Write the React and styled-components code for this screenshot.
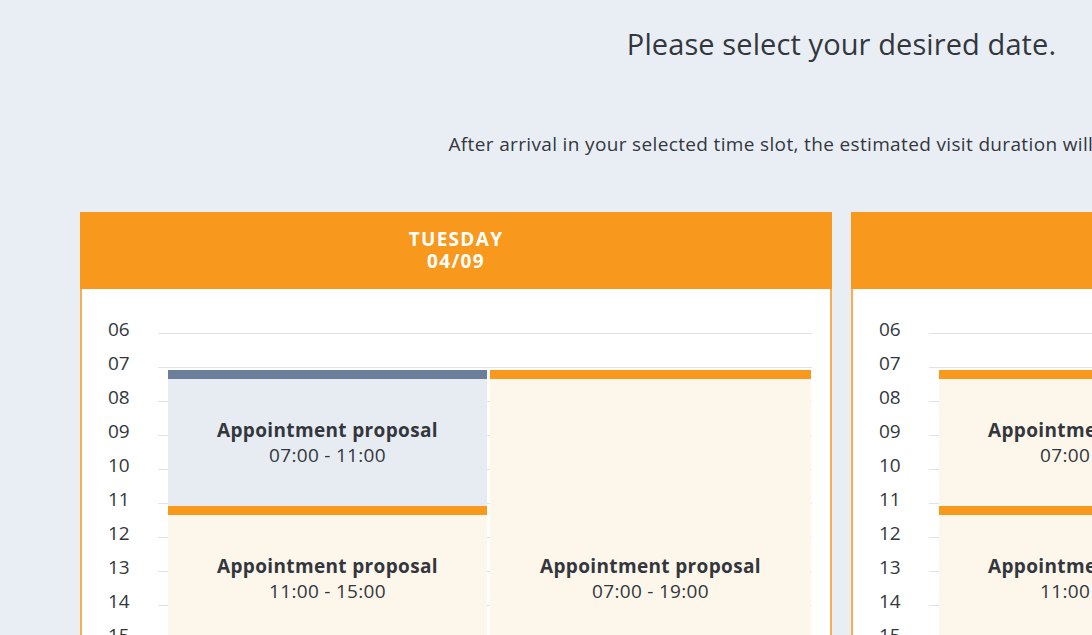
import React from 'react'
import styled, { createGlobalStyle } from 'styled-components'

const GlobalStyle = createGlobalStyle`
  html, body {
    margin: 0;
    padding: 0;
    background: #e9eef5;
    overflow: hidden;
  }
  body {
    font-family: 'Open Sans', 'Noto Sans', sans-serif;
    color: #33373d;
  }
`

const FIRST_HOUR = 6
const LAST_HOUR = 20
const hours = []
for (let h = FIRST_HOUR; h <= LAST_HOUR; h++) hours.push(h)

const days = [
  {
    name: 'Tuesday',
    date: '04/09',
    slots: [
      { col: 1, from: 7, to: 11, selected: true },
      { col: 1, from: 11, to: 15 },
      { col: 1, from: 15, to: 19 },
      { col: 2, from: 7, to: 19 },
    ],
  },
  {
    name: 'Wednesday',
    date: '05/09',
    slots: [
      { col: 1, from: 7, to: 11 },
      { col: 1, from: 11, to: 15 },
      { col: 1, from: 15, to: 19 },
      { col: 2, from: 7, to: 19 },
    ],
  },
]

const pad = (n) => String(n).padStart(2, '0')
// each hour takes two 17px rows, the hour line sits between them
const lineOf = (h) => 2 * (h - FIRST_HOUR) + 2

const App = () => {
  return (
    <>
      <GlobalStyle />
      <Page>
        <Title>Please select your desired date.</Title>
        <Intro>
          After arrival in your selected time slot, the estimated visit duration will be 30 minutes.
        </Intro>
        <Days>
          {days.map((day) => (
            <DayCard key={day.date}>
              <DayHeader>
                <span>{day.name}</span>
                <span>{day.date}</span>
              </DayHeader>
              <DayBody>
                <Timeline>
                  {hours.map((h) => (
                    <React.Fragment key={h}>
                      <HourLabel style={{ gridRow: `${lineOf(h) - 1} / span 2` }}>{pad(h)}</HourLabel>
                      <HourLine style={{ gridRow: `${lineOf(h) - 1} / span 2` }} />
                    </React.Fragment>
                  ))}
                  {day.slots.map((s, i) => (
                    <Slot
                      key={i}
                      $col={s.col}
                      $selected={s.selected}
                      style={{ gridRow: `${lineOf(s.from)} / ${lineOf(s.to)}` }}
                    >
                      <SlotTitle>Appointment proposal</SlotTitle>
                      <SlotTime>
                        {pad(s.from)}:00 - {pad(s.to)}:00
                      </SlotTime>
                    </Slot>
                  ))}
                </Timeline>
              </DayBody>
            </DayCard>
          ))}
        </Days>
      </Page>
    </>
  )
}

const Page = styled.main`
  width: 1683px;
  box-sizing: border-box;
  padding: 24px 80px 0;
  display: flex;
  flex-direction: column;
  align-items: center;
`

const Title = styled.h1`
  margin: 0;
  font-size: 29px;
  font-weight: 400;
  line-height: 40px;
  letter-spacing: 0.1px;
  color: #33373d;
`

const Intro = styled.p`
  margin: 67px 0 0;
  font-size: 19px;
  line-height: 26px;
  letter-spacing: 0.35px;
  color: #33373d;
`

const Days = styled.div`
  margin-top: 55px;
  width: 100%;
  display: grid;
  grid-template-columns: 1fr 1fr;
  gap: 19px;
`

const DayCard = styled.section`
  display: flex;
  flex-direction: column;
  background: #fff;
  border: 2px solid #f9ad4f;
  border-top: none;
`

const DayHeader = styled.header`
  margin: 0 -2px;
  height: 77px;
  background: #f8981d;
  color: #fff;
  display: flex;
  flex-direction: column;
  align-items: center;
  justify-content: center;
  font-size: 19px;
  font-weight: 700;
  line-height: 22px;
  text-transform: uppercase;
  letter-spacing: 1.3px;
  padding-bottom: 1px;
  box-sizing: border-box;
`

const DayBody = styled.div`
  padding: 28px 18px 40px 26px;
`

const Timeline = styled.div`
  display: grid;
  grid-template-columns: 50px 10px 1fr 1fr;
  grid-auto-rows: 17px;
`

const HourLabel = styled.div`
  grid-column: 1;
  align-self: center;
  font-size: 19px;
  line-height: 22px;
  margin-top: -10px;
  color: #33373d;
`

const HourLine = styled.div`
  grid-column: 2 / -1;
  position: relative;
  &::after {
    content: '';
    position: absolute;
    left: 0;
    right: 0;
    top: 16px;
    height: 1px;
    background: #dfe3e8;
  }
`

const Slot = styled.div`
  grid-column: ${(p) => p.$col + 2};
  margin: 2px ${(p) => (p.$col === 1 ? '3px' : '1px')} -2px 0;
  position: relative;
  z-index: 1;
  background: ${(p) => (p.$selected ? '#e7ecf3' : '#fdf6ea')};
  border-top: 9px solid ${(p) => (p.$selected ? '#6c7f9a' : '#f8981d')};
  display: flex;
  flex-direction: column;
  align-items: center;
  justify-content: center;
  cursor: pointer;
`

const SlotTitle = styled.div`
  font-size: 19px;
  font-weight: 700;
  line-height: 25px;
  color: #33373d;
  letter-spacing: 0.35px;
`

const SlotTime = styled.div`
  font-size: 19px;
  line-height: 25px;
  letter-spacing: 0.3px;
  color: #33373d;
`

export default App
